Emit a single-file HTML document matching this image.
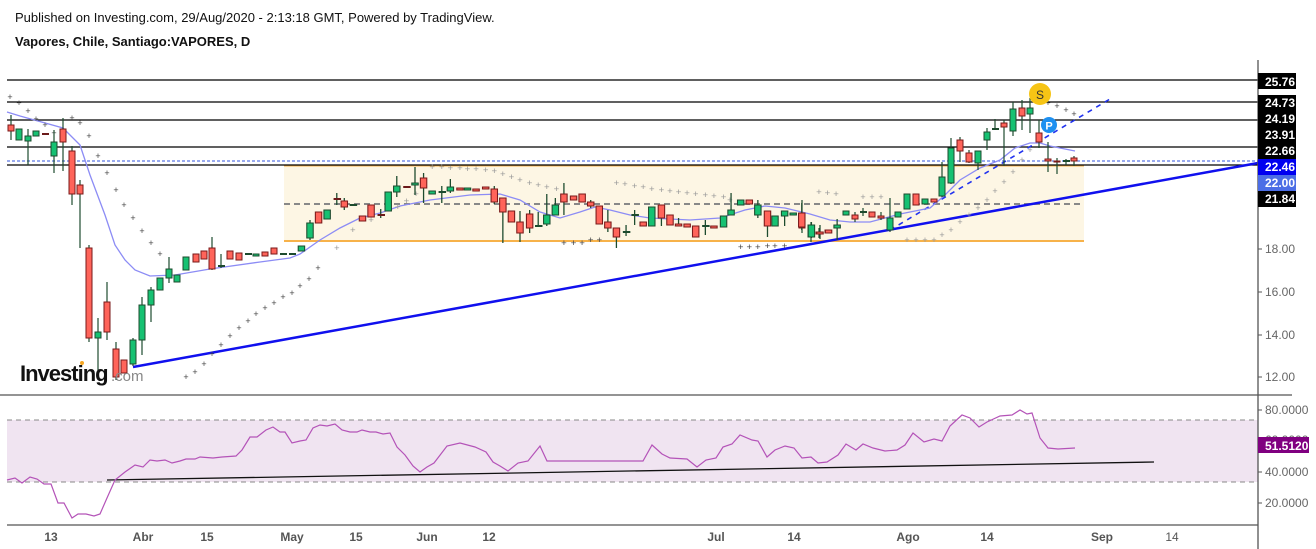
<!DOCTYPE html>
<html><head><meta charset="utf-8"><style>
html,body{margin:0;padding:0;background:#fff;width:1316px;height:549px;overflow:hidden}
svg{display:block;font-family:"Liberation Sans",Arial,sans-serif}
</style></head><body>
<svg width="1316" height="549" viewBox="0 0 1316 549" xmlns="http://www.w3.org/2000/svg">
<text x="15" y="22" font-size="13" fill="#111">Published on Investing.com, 29/Aug/2020 - 2:13:18 GMT, Powered by TradingView.</text>
<text x="15" y="46" font-size="13" font-weight="bold" fill="#111">Vapores, Chile, Santiago:VAPORES, D</text>

<!-- range box -->
<rect x="284" y="165" width="800" height="76" fill="#fdf6e4"/>
<line x1="284" y1="165.5" x2="1084" y2="165.5" stroke="#f7b24a" stroke-width="2"/>
<line x1="284" y1="241" x2="1084" y2="241" stroke="#f7b24a" stroke-width="2"/>
<line x1="284" y1="204" x2="1084" y2="204" stroke="#888" stroke-width="2" stroke-dasharray="6,4"/>

<!-- horizontal levels -->
<g stroke="#000" stroke-width="1.3">
<line x1="7" y1="80" x2="1258" y2="80"/>
<line x1="7" y1="102" x2="1258" y2="102"/>
<line x1="7" y1="120" x2="1258" y2="120"/>
<line x1="7" y1="147" x2="1258" y2="147"/>
<line x1="7" y1="165" x2="1258" y2="165"/>
</g>
<line x1="7" y1="161" x2="1258" y2="161" stroke="#3355dd" stroke-width="1" stroke-dasharray="3,2"/>

<!-- trend lines -->
<line x1="133" y1="367" x2="1258" y2="163" stroke="#1010ee" stroke-width="2.5"/>
<line x1="890" y1="230" x2="1110" y2="99" stroke="#2233ee" stroke-width="1.6" stroke-dasharray="5,5"/>

<!-- MA -->
<polyline fill="none" stroke="#8c8cf5" stroke-width="1.3" points="7,112 20,116 63,128 80,145 90,175 105,215 115,245 125,260 135,270 150,276 175,275 210,269 260,262 290,258 300,254 320,240 340,228 360,218 380,213 400,206 430,200 470,195 500,194 520,200 540,212 560,218 580,212 595,207 610,210 630,215 650,218 670,219 690,220 720,218 745,210 765,206 785,208 810,214 830,220 850,222 870,222 885,218 900,214 930,208 945,195 960,180 980,168 1000,160 1015,148 1030,143 1040,143 1050,146 1075,151"/>

<!-- SAR dots (unscaled) -->
<g fill="#444" font-size="9" text-anchor="middle">
<text x="10" y="100">+</text><text x="19" y="106">+</text><text x="28" y="114">+</text><text x="36" y="122">+</text><text x="45" y="128">+</text><text x="54" y="136">+</text><text x="72" y="121">+</text><text x="80" y="126">+</text><text x="89" y="139">+</text><text x="98" y="159">+</text><text x="107" y="176">+</text><text x="116" y="193">+</text><text x="124" y="208">+</text><text x="133" y="221">+</text><text x="142" y="234">+</text><text x="151" y="246">+</text><text x="160" y="257">+</text>
<text x="186" y="380">+</text><text x="195" y="375">+</text><text x="204" y="367">+</text><text x="212" y="357">+</text><text x="221" y="348">+</text><text x="230" y="339">+</text><text x="239" y="331">+</text><text x="248" y="324">+</text><text x="256" y="317">+</text><text x="265" y="311">+</text><text x="274" y="306">+</text><text x="283" y="300">+</text><text x="292" y="296">+</text><text x="300" y="289">+</text><text x="309" y="282">+</text><text x="318" y="271">+</text>
<text x="1048" y="106">+</text><text x="1057" y="109">+</text><text x="1066" y="113">+</text><text x="1074" y="117">+</text>
</g>
<g fill="#999" font-size="9" text-anchor="middle">
<text x="863" y="200">+</text><text x="872" y="200">+</text><text x="881" y="200">+</text>
<text x="907" y="243">+</text><text x="916" y="243">+</text><text x="925" y="243">+</text><text x="934" y="243">+</text><text x="942" y="238">+</text><text x="951" y="233">+</text><text x="960" y="225">+</text><text x="969" y="218">+</text><text x="978" y="211">+</text><text x="987" y="203">+</text><text x="995" y="194">+</text><text x="1004" y="185">+</text><text x="1013" y="175">+</text><text x="1022" y="163">+</text><text x="1030" y="153">+</text>
</g>

<!-- candles: unscaled early & late -->
<g stroke="#1d4b2e" stroke-width="1.2">
<line x1="11" y1="115" x2="11" y2="140"/><line x1="28" y1="129" x2="28" y2="165"/><line x1="54" y1="130" x2="54" y2="173"/><line x1="63" y1="118" x2="63" y2="171"/><line x1="72" y1="146" x2="72" y2="205"/><line x1="80" y1="180" x2="80" y2="248"/><line x1="89" y1="245" x2="89" y2="342"/><line x1="98" y1="318" x2="98" y2="375"/><line x1="107" y1="282" x2="107" y2="340"/><line x1="116" y1="342" x2="116" y2="380"/><line x1="133" y1="338" x2="133" y2="366"/><line x1="142" y1="297" x2="142" y2="355"/><line x1="151" y1="287" x2="151" y2="322"/><line x1="169" y1="257" x2="169" y2="283"/><line x1="212" y1="237" x2="212" y2="270"/><line x1="221" y1="254" x2="221" y2="268"/>
<line x1="802" y1="200" x2="802" y2="233"/><line x1="811" y1="222" x2="811" y2="242"/><line x1="819" y1="228" x2="819" y2="238"/><line x1="855" y1="212" x2="855" y2="222"/>
<line x1="863" y1="208" x2="863" y2="216"/><line x1="881" y1="212" x2="881" y2="220"/><line x1="890" y1="198" x2="890" y2="232"/><line x1="942" y1="162" x2="942" y2="197"/><line x1="951" y1="138" x2="951" y2="184"/><line x1="960" y1="137" x2="960" y2="162"/><line x1="969" y1="150" x2="969" y2="163"/><line x1="978" y1="151" x2="978" y2="170"/><line x1="987" y1="128" x2="987" y2="150"/><line x1="995" y1="119" x2="995" y2="129"/><line x1="1004" y1="120" x2="1004" y2="166"/><line x1="1013" y1="102" x2="1013" y2="136"/><line x1="1022" y1="100" x2="1022" y2="130"/><line x1="1030" y1="98" x2="1030" y2="133"/><line x1="1039" y1="120" x2="1039" y2="148"/><line x1="1048" y1="142" x2="1048" y2="172"/><line x1="1057" y1="158" x2="1057" y2="174"/><line x1="1066" y1="159" x2="1066" y2="165"/><line x1="1074" y1="156" x2="1074" y2="166"/>
</g>
<g stroke="#1d4b2e" stroke-width="1" fill="#16c172">
<rect x="16" y="129" width="6" height="11"/><rect x="25" y="136" width="6" height="5"/><rect x="33" y="131" width="6" height="5"/><rect x="51" y="142" width="6" height="14"/><rect x="95" y="332" width="6" height="6"/><rect x="130" y="340" width="6" height="24"/><rect x="139" y="305" width="6" height="35"/><rect x="148" y="290" width="6" height="15"/><rect x="157" y="278" width="6" height="12"/><rect x="166" y="269" width="6" height="9"/><rect x="174" y="275" width="6" height="7"/><rect x="183" y="257" width="6" height="13"/><rect x="253" y="254" width="6" height="2"/>
<rect x="808" y="225" width="6" height="12"/><rect x="843" y="211" width="6" height="4"/>
<rect x="887" y="218" width="6" height="12"/><rect x="895" y="212" width="6" height="5"/><rect x="904" y="194" width="6" height="15"/><rect x="922" y="199" width="6" height="5"/><rect x="939" y="177" width="6" height="19"/><rect x="948" y="148" width="6" height="35"/><rect x="975" y="151" width="6" height="12"/><rect x="984" y="132" width="6" height="8"/><rect x="1010" y="109" width="6" height="22"/><rect x="1027" y="108" width="6" height="6"/>
</g>
<g stroke="#7a1a1a" stroke-width="1" fill="#ff645a">
<rect x="8" y="125" width="6" height="6"/><rect x="60" y="129" width="6" height="13"/><rect x="69" y="151" width="6" height="43"/><rect x="77" y="185" width="6" height="9"/><rect x="86" y="248" width="6" height="90"/><rect x="104" y="302" width="6" height="30"/><rect x="113" y="349" width="6" height="28"/><rect x="121" y="360" width="6" height="13"/><rect x="193" y="254" width="6" height="8"/><rect x="201" y="251" width="6" height="8"/><rect x="209" y="248" width="6" height="21"/><rect x="227" y="251" width="6" height="8"/><rect x="236" y="253" width="6" height="7"/><rect x="262" y="252" width="6" height="4"/><rect x="271" y="248" width="6" height="6"/>
<rect x="799" y="213" width="6" height="15"/><rect x="816" y="232" width="6" height="2"/><rect x="825" y="230" width="6" height="3"/><rect x="852" y="215" width="6" height="4"/>
<rect x="869" y="212" width="6" height="5"/><rect x="878" y="216" width="6" height="2"/><rect x="913" y="194" width="6" height="11"/><rect x="931" y="199" width="6" height="3"/><rect x="957" y="140" width="6" height="11"/><rect x="966" y="153" width="6" height="9"/><rect x="1001" y="123" width="6" height="4"/><rect x="1019" y="108" width="6" height="8"/><rect x="1036" y="133" width="6" height="9"/><rect x="1045" y="159" width="6" height="2"/><rect x="1054" y="161" width="6" height="1"/><rect x="1071" y="158" width="6" height="3"/>
</g>
<g stroke="#1d4b2e" stroke-width="2">
<line x1="42" y1="134" x2="49" y2="134" stroke="#6b1a1a"/><line x1="218" y1="266" x2="225" y2="266"/><line x1="245" y1="254" x2="252" y2="254"/><line x1="280" y1="254" x2="287" y2="254"/><line x1="289" y1="254" x2="296" y2="254"/><line x1="860" y1="212" x2="867" y2="212"/><line x1="992" y1="129" x2="999" y2="129"/><line x1="1063" y1="161" x2="1070" y2="161"/>
</g>

<!-- middle section (horizontally rescaled) -->
<g transform="translate(280,0) scale(1.0714,1) translate(-280,0)">
<g fill="#999" font-size="9" text-anchor="middle">
<text x="333" y="251">+</text><text x="348" y="233">+</text><text x="365" y="223">+</text><text x="390" y="210">+</text><text x="398" y="204">+</text><text x="407" y="197">+</text>
<text x="422" y="170">+</text><text x="431" y="170">+</text><text x="439" y="171">+</text><text x="448" y="171">+</text><text x="455" y="172">+</text><text x="463" y="172">+</text><text x="472" y="173">+</text><text x="480" y="174">+</text><text x="488" y="177">+</text><text x="496" y="180">+</text><text x="504" y="183">+</text><text x="513" y="186">+</text><text x="521" y="188">+</text><text x="529" y="190">+</text><text x="538" y="192">+</text>
<text x="594" y="186">+</text><text x="602" y="187">+</text><text x="611" y="189">+</text><text x="619" y="190">+</text><text x="627" y="192">+</text><text x="636" y="193">+</text><text x="644" y="194">+</text><text x="652" y="195">+</text><text x="660" y="196">+</text><text x="668" y="197">+</text><text x="677" y="198">+</text><text x="685" y="199">+</text><text x="694" y="200">+</text><text x="700" y="203">+</text>
<text x="783" y="195">+</text><text x="791" y="196">+</text><text x="799" y="197">+</text>
</g>
<g fill="#444" font-size="9" text-anchor="middle">
<text x="545" y="246">+</text><text x="554" y="246">+</text><text x="562" y="246">+</text><text x="570" y="243">+</text><text x="578" y="243">+</text>
<text x="710" y="250">+</text><text x="718" y="250">+</text><text x="726" y="250">+</text><text x="735" y="249">+</text><text x="742" y="249">+</text><text x="751" y="249">+</text>
</g>
<g stroke="#1d4b2e" stroke-width="1.2">
<line x1="308" y1="220" x2="308" y2="240"/><line x1="333" y1="193" x2="333" y2="205"/><line x1="340" y1="198" x2="340" y2="210"/><line x1="374" y1="209" x2="374" y2="218"/><line x1="389" y1="176" x2="389" y2="197"/><line x1="406" y1="167" x2="406" y2="195"/><line x1="414" y1="173" x2="414" y2="203"/><line x1="431" y1="186" x2="431" y2="203"/><line x1="439" y1="179" x2="439" y2="193"/><line x1="480" y1="186" x2="480" y2="204"/><line x1="488" y1="198" x2="488" y2="243"/><line x1="504" y1="211" x2="504" y2="242"/><line x1="513" y1="210" x2="513" y2="233"/><line x1="521" y1="212" x2="521" y2="227"/><line x1="529" y1="194" x2="529" y2="226"/><line x1="537" y1="198" x2="537" y2="215"/><line x1="545" y1="183" x2="545" y2="215"/><line x1="570" y1="200" x2="570" y2="208"/><line x1="586" y1="210" x2="586" y2="232"/><line x1="594" y1="228" x2="594" y2="248"/><line x1="603" y1="225" x2="603" y2="236"/><line x1="611" y1="210" x2="611" y2="225"/><line x1="636" y1="205" x2="636" y2="226"/><line x1="652" y1="218" x2="652" y2="226"/><line x1="677" y1="220" x2="677" y2="235"/><line x1="701" y1="193" x2="701" y2="215"/><line x1="726" y1="200" x2="726" y2="218"/><line x1="735" y1="211" x2="735" y2="237"/><line x1="751" y1="211" x2="751" y2="226"/><line x1="767" y1="203" x2="767" y2="230"/><line x1="776" y1="222" x2="776" y2="238"/><line x1="784" y1="225" x2="784" y2="239"/><line x1="800" y1="219" x2="800" y2="240"/>
</g>
<g stroke="#1d4b2e" stroke-width="1" fill="#16c172">
<rect x="297" y="246" width="6" height="5"/><rect x="305" y="223" width="6" height="15"/><rect x="321" y="210" width="6" height="9"/><rect x="378" y="192" width="6" height="19"/><rect x="386" y="186" width="6" height="6"/><rect x="403" y="183" width="6" height="2"/><rect x="419" y="191" width="6" height="3"/><rect x="436" y="187" width="6" height="4"/><rect x="452" y="188" width="6" height="2"/><rect x="526" y="215" width="6" height="9"/><rect x="534" y="205" width="6" height="10"/><rect x="624" y="207" width="6" height="19"/><rect x="691" y="216" width="6" height="11"/><rect x="698" y="210" width="6" height="5"/><rect x="707" y="200" width="6" height="5"/><rect x="723" y="205" width="6" height="10"/><rect x="739" y="216" width="6" height="10"/><rect x="748" y="211" width="6" height="5"/><rect x="756" y="213" width="6" height="2"/><rect x="773" y="225" width="6" height="12"/><rect x="797" y="225" width="6" height="3"/>
</g>
<g stroke="#7a1a1a" stroke-width="1" fill="#ff645a">
<rect x="313" y="212" width="6" height="11"/><rect x="337" y="201" width="6" height="6"/><rect x="354" y="216" width="6" height="5"/><rect x="362" y="205" width="6" height="12"/><rect x="411" y="178" width="6" height="10"/><rect x="445" y="188" width="6" height="2"/><rect x="460" y="189" width="6" height="2"/><rect x="469" y="187" width="6" height="2"/><rect x="477" y="189" width="6" height="13"/><rect x="485" y="198" width="6" height="14"/><rect x="493" y="211" width="6" height="11"/><rect x="501" y="222" width="6" height="11"/><rect x="510" y="214" width="6" height="14"/><rect x="542" y="194" width="6" height="8"/><rect x="551" y="196" width="6" height="4"/><rect x="559" y="194" width="6" height="8"/><rect x="567" y="202" width="6" height="4"/><rect x="575" y="206" width="6" height="18"/><rect x="583" y="222" width="6" height="6"/><rect x="591" y="228" width="6" height="9"/><rect x="616" y="222" width="6" height="4"/><rect x="633" y="205" width="6" height="13"/><rect x="641" y="215" width="6" height="10"/><rect x="649" y="224" width="6" height="2"/><rect x="657" y="224" width="6" height="3"/><rect x="665" y="226" width="6" height="11"/><rect x="682" y="226" width="6" height="2"/><rect x="715" y="200" width="6" height="4"/><rect x="732" y="211" width="6" height="15"/><rect x="764" y="213" width="6" height="14"/><rect x="781" y="232" width="6" height="2"/><rect x="789" y="230" width="6" height="3"/>
</g>
<g stroke="#1d4b2e" stroke-width="2">
<line x1="330" y1="199" x2="337" y2="199" stroke="#6b1a1a"/><line x1="345" y1="205" x2="352" y2="205"/><line x1="371" y1="215" x2="378" y2="215" stroke="#6b1a1a"/><line x1="395" y1="187" x2="402" y2="187" stroke="#6b1a1a"/><line x1="428" y1="192" x2="435" y2="192"/><line x1="518" y1="226" x2="525" y2="226"/><line x1="600" y1="232" x2="607" y2="232"/><line x1="608" y1="215" x2="615" y2="215"/><line x1="674" y1="226" x2="681" y2="226"/>
</g>
</g>

<!-- S / P markers -->
<circle cx="1040" cy="94" r="11" fill="#f6c415"/>
<text x="1040" y="99" font-size="12" text-anchor="middle" fill="#333">S</text>
<circle cx="1049" cy="125" r="8" fill="#1e90f0"/>
<text x="1049" y="129.5" font-size="11" font-weight="bold" text-anchor="middle" fill="#fff">P</text>

<!-- logo -->
<text x="20" y="381" font-size="22" font-weight="bold" fill="#111" letter-spacing="-1">Investing</text>
<text x="111" y="381" font-size="15" fill="#888">.com</text>
<circle cx="82" cy="363" r="2" fill="#f5a623"/>

<!-- RSI -->
<rect x="7" y="420" width="1251" height="62" fill="#f0e4f1"/>
<line x1="7" y1="420" x2="1258" y2="420" stroke="#888" stroke-dasharray="5,4"/>
<line x1="7" y1="482" x2="1258" y2="482" stroke="#888" stroke-dasharray="5,4"/>
<line x1="107" y1="480" x2="1154" y2="462" stroke="#111" stroke-width="1.3"/>
<polyline fill="none" stroke="#b453b8" stroke-width="1.2" points="7,480 15,478 22,483 30,477 37,479 44,484 51,484 58,503 64,503 72,518 78,514 86,514 94,516 100,514 107,498 115,480 125,472 135,465 143,467 150,460 157,461 165,460 172,463 180,461 186,459 195,459 200,457 213,458 222,457 236,456 242,450 250,437 257,437 266,430 273,427 280,432 285,432 292,443 300,441 306,440 313,428 320,425 327,426 335,424 342,430 350,432 357,432 362,430 370,432 376,432 383,434 390,433 397,447 405,455 413,466 420,472 427,467 434,463 447,446 460,443 475,447 486,452 493,462 500,466 508,471 518,463 528,461 540,446 547,461 643,461 652,445 662,454 670,458 687,459 697,467 706,460 716,458 723,447 732,444 740,435 752,440 758,441 767,457 775,450 785,446 794,448 802,458 811,457 818,463 827,462 838,455 846,444 856,450 863,444 873,448 885,451 897,450 905,445 913,433 924,442 934,439 942,441 950,426 962,415 970,418 979,427 987,422 1000,416 1012,415 1020,410 1027,414 1032,413 1040,438 1048,448 1058,449 1075,448"/>

<!-- axes -->
<line x1="1258" y1="60" x2="1258" y2="549" stroke="#555" stroke-width="1.3"/>
<line x1="0" y1="395" x2="1292" y2="395" stroke="#555" stroke-width="1.3"/>
<line x1="7" y1="525" x2="1258" y2="525" stroke="#555" stroke-width="1.3"/>
<g stroke="#555">
<line x1="1258" y1="249" x2="1262" y2="249"/><line x1="1258" y1="292" x2="1262" y2="292"/><line x1="1258" y1="335" x2="1262" y2="335"/><line x1="1258" y1="377" x2="1262" y2="377"/>
<line x1="1258" y1="410" x2="1262" y2="410"/><line x1="1258" y1="440" x2="1262" y2="440"/><line x1="1258" y1="472" x2="1262" y2="472"/><line x1="1258" y1="503" x2="1262" y2="503"/>
</g>
<g font-size="12" fill="#666">
<text x="1265" y="253">18.00</text><text x="1265" y="296">16.00</text><text x="1265" y="339">14.00</text><text x="1265" y="381">12.00</text>
<text x="1265" y="414">80.0000</text><text x="1265" y="444">60.0000</text><text x="1265" y="476">40.0000</text><text x="1265" y="507">20.0000</text>
</g>
<rect x="1258" y="73" width="38" height="16" fill="#000"/>
<rect x="1258" y="95" width="38" height="112" fill="#000"/>
<rect x="1258" y="159" width="38" height="16" fill="#0000f0"/>
<rect x="1258" y="175" width="38" height="16" fill="#4c6ee6"/>
<rect x="1258" y="437" width="51" height="16" fill="#800080"/>
<g font-size="12" font-weight="bold" fill="#fff">
<text x="1265" y="86">25.76</text><text x="1265" y="107">24.73</text><text x="1265" y="123">24.19</text><text x="1265" y="139">23.91</text><text x="1265" y="155">22.66</text><text x="1265" y="171">22.46</text><text x="1265" y="187">22.00</text><text x="1265" y="203">21.84</text>
<text x="1265" y="450">51.5120</text>
</g>
<g font-size="12" font-weight="bold" fill="#555" text-anchor="middle">
<text x="51" y="541">13</text><text x="143" y="541">Abr</text><text x="207" y="541">15</text><text x="292" y="541">May</text><text x="356" y="541">15</text><text x="427" y="541">Jun</text><text x="489" y="541">12</text><text x="716" y="541">Jul</text><text x="794" y="541">14</text><text x="908" y="541">Ago</text><text x="987" y="541">14</text><text x="1102" y="541">Sep</text><text x="1172" y="541" font-weight="normal">14</text>
</g>
</svg>
</body></html>
